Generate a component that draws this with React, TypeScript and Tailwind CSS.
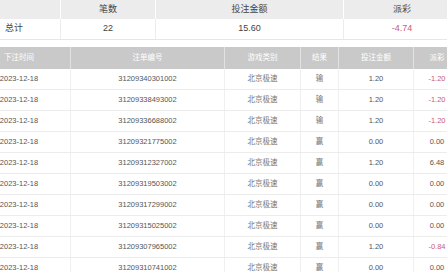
import React from "react";

const rows: [string, string, string, string, boolean][] = [
  ["31209340301002", "输", "1.20", "-1.20", true],
  ["31209338493002", "输", "1.20", "-1.20", true],
  ["31209336688002", "输", "1.20", "-1.20", true],
  ["31209321775002", "赢", "0.00", "0.00", false],
  ["31209312327002", "赢", "1.20", "6.48", false],
  ["31209319503002", "赢", "0.00", "0.00", false],
  ["31209317299002", "赢", "0.00", "0.00", false],
  ["31209315025002", "赢", "0.00", "0.00", false],
  ["31209307965002", "赢", "1.20", "-0.84", true],
  ["31209310741002", "赢", "0.00", "0.00", false],
];

const font = { fontFamily: '"Liberation Sans", "Noto Sans CJK SC", sans-serif' };

export default function App() {
  return (
    <div className="w-[447px] h-[272px] overflow-hidden bg-white" style={font}>
      <div className="ml-[-32px] w-[492px]">
        {/* summary */}
        <div className="grid grid-cols-[93px_95px_188px_116px] h-[19px] bg-[#ececec] text-[9px] text-[#444]">
          <div className="border-r border-white"></div>
          <div className="border-r border-white flex items-center justify-center">笔数</div>
          <div className="border-r border-white flex items-center justify-center">投注金额</div>
          <div className="flex items-center justify-center">派彩</div>
        </div>
        <div className="grid grid-cols-[93px_95px_188px_116px] h-[21px] border-b border-[#e6e6e6] text-[9px] text-[#444]">
          <div className="border-r border-[#ececec] flex items-center justify-center">总计</div>
          <div className="border-r border-[#ececec] flex items-center justify-center">22</div>
          <div className="border-r border-[#ececec] flex items-center justify-center">15.60</div>
          <div className="flex items-center justify-center text-[#c85b72]">-4.74</div>
        </div>

        {/* detail table */}
        <div className="mt-[7px]">
          <div className="grid grid-cols-[103px_154px_76px_38px_75px_46px] h-[22px] bg-[#c9c9c9] text-[7.5px] text-white">
            <div className="border-r border-[#e2e2e2] flex items-center justify-center">下注时间</div>
            <div className="border-r border-[#e2e2e2] flex items-center justify-center">注单编号</div>
            <div className="border-r border-[#e2e2e2] flex items-center justify-center">游戏类别</div>
            <div className="border-r border-[#e2e2e2] flex items-center justify-center">结果</div>
            <div className="border-r border-[#e2e2e2] flex items-center justify-center">投注金额</div>
            <div className="flex items-center justify-center">派彩</div>
          </div>
          {rows.map((r, i) => (
            <div
              key={i}
              className="grid grid-cols-[103px_154px_76px_38px_75px_46px] h-[21px] border-b border-[#ececec] text-[7.5px] text-[#555]"
            >
              <div className="border-r border-[#f0f0f0] flex items-center justify-center">2023-12-18</div>
              <div className="border-r border-[#f0f0f0] flex items-center justify-center">{r[0]}</div>
              <div className="border-r border-[#f0f0f0] flex items-center justify-center text-[#777]">北京极速</div>
              <div className="border-r border-[#f0f0f0] flex items-center justify-center text-[#777]">{r[1]}</div>
              <div className="border-r border-[#f0f0f0] flex items-center justify-center">{r[2]}</div>
              <div className={"flex items-center justify-center " + (r[4] ? "text-[#c85b72]" : "")}>{r[3]}</div>
            </div>
          ))}
        </div>
      </div>
    </div>
  );
}
